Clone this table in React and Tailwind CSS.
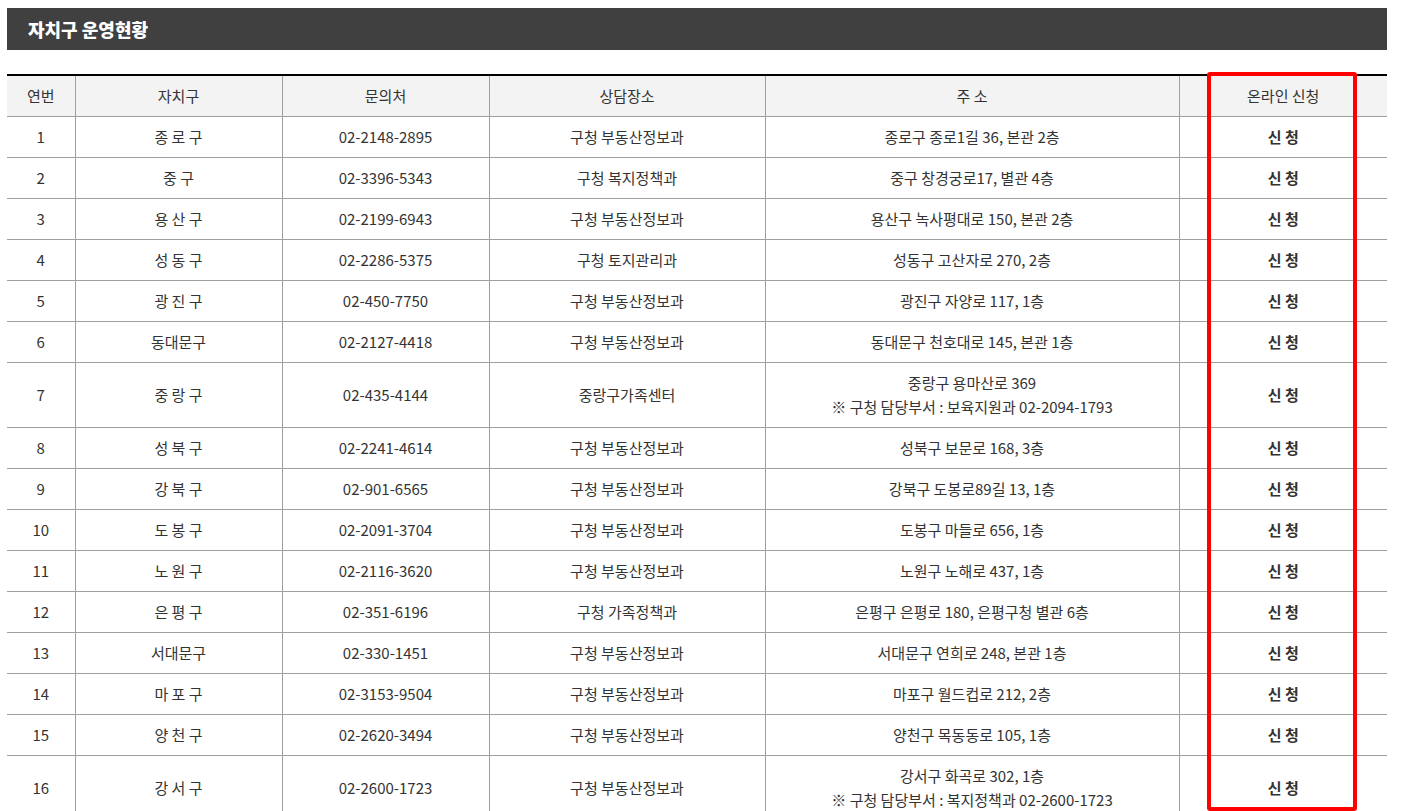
import React from 'react'

const rows = [
    ['1', '종 로 구', '02-2148-2895', '구청 부동산정보과', ['종로구 종로1길 36, 본관 2층']],
    ['2', '중 구', '02-3396-5343', '구청 복지정책과', ['중구 창경궁로17, 별관 4층']],
    ['3', '용 산 구', '02-2199-6943', '구청 부동산정보과', ['용산구 녹사평대로 150, 본관 2층']],
    ['4', '성 동 구', '02-2286-5375', '구청 토지관리과', ['성동구 고산자로 270, 2층']],
    ['5', '광 진 구', '02-450-7750', '구청 부동산정보과', ['광진구 자양로 117, 1층']],
    ['6', '동대문구', '02-2127-4418', '구청 부동산정보과', ['동대문구 천호대로 145, 본관 1층']],
    ['7', '중 랑 구', '02-435-4144', '중랑구가족센터', ['중랑구 용마산로 369', '※ 구청 담당부서 : 보육지원과 02-2094-1793']],
    ['8', '성 북 구', '02-2241-4614', '구청 부동산정보과', ['성북구 보문로 168, 3층']],
    ['9', '강 북 구', '02-901-6565', '구청 부동산정보과', ['강북구 도봉로89길 13, 1층']],
    ['10', '도 봉 구', '02-2091-3704', '구청 부동산정보과', ['도봉구 마들로 656, 1층']],
    ['11', '노 원 구', '02-2116-3620', '구청 부동산정보과', ['노원구 노해로 437, 1층']],
    ['12', '은 평 구', '02-351-6196', '구청 가족정책과', ['은평구 은평로 180, 은평구청 별관 6층']],
    ['13', '서대문구', '02-330-1451', '구청 부동산정보과', ['서대문구 연희로 248, 본관 1층']],
    ['14', '마 포 구', '02-3153-9504', '구청 부동산정보과', ['마포구 월드컵로 212, 2층']],
    ['15', '양 천 구', '02-2620-3494', '구청 부동산정보과', ['양천구 목동동로 105, 1층']],
    ['16', '강 서 구', '02-2600-1723', '구청 부동산정보과', ['강서구 화곡로 302, 1층', '※ 구청 담당부서 : 복지정책과 02-2600-1723']],
]

const headers = ['연번', '자치구', '문의처', '상담장소', '주 소', '온라인 신청']
const widths = ['w-[68px]', 'w-[207px]', 'w-[207px]', 'w-[276px]', 'w-[414px]', 'w-[208px]']

const App = () => {
    return (
        <div className="h-[811px] overflow-hidden bg-white font-['Noto_Sans_CJK_KR','Noto_Sans',sans-serif] text-[#333]">
            <div className="pt-2 pl-[7px] w-[1387px]">
                {/* Title bar */}
                <div className="h-[42px] bg-[#404040] flex items-center pl-[21px]">
                    <h2 className="text-white text-[18px] font-black">자치구 운영현황</h2>
                </div>

                {/* Table */}
                <div className="relative mt-6">
                    <table className="w-[1380px] table-fixed border-collapse border-t-2 border-black text-[15px] leading-6">
                        <thead>
                            <tr className="bg-[#f3f3f3]">
                                {headers.map((h, i) => (
                                    <th key={h} className={`${widths[i]} h-10 py-2 font-normal text-center border-b border-[#a0a0a0] ${i > 0 ? 'border-l' : ''}`}>
                                        {h}
                                    </th>
                                ))}
                            </tr>
                        </thead>
                        <tbody>
                            {rows.map((r) => (
                                <tr key={r[0]}>
                                    <td className="py-2 text-center border-b border-[#a0a0a0]">{r[0]}</td>
                                    <td className="py-2 text-center border-b border-l border-[#a0a0a0]">{r[1]}</td>
                                    <td className="py-2 text-center border-b border-l border-[#a0a0a0]">{r[2]}</td>
                                    <td className="py-2 text-center border-b border-l border-[#a0a0a0]">{r[3]}</td>
                                    <td className="py-2 text-center border-b border-l border-[#a0a0a0]">
                                        {r[4].map((line) => (
                                            <div key={line}>{line}</div>
                                        ))}
                                    </td>
                                    <td className="py-2 text-center border-b border-l border-[#a0a0a0] font-bold">신 청</td>
                                </tr>
                            ))}
                        </tbody>
                    </table>

                    {/* Highlight box over the online column */}
                    <div className="absolute top-[-2px] left-[1200px] w-[150px] h-[739px] border-4 border-[#ff0000] rounded-[3px] pointer-events-none"></div>
                </div>
            </div>
        </div>
    )
}

export default App
